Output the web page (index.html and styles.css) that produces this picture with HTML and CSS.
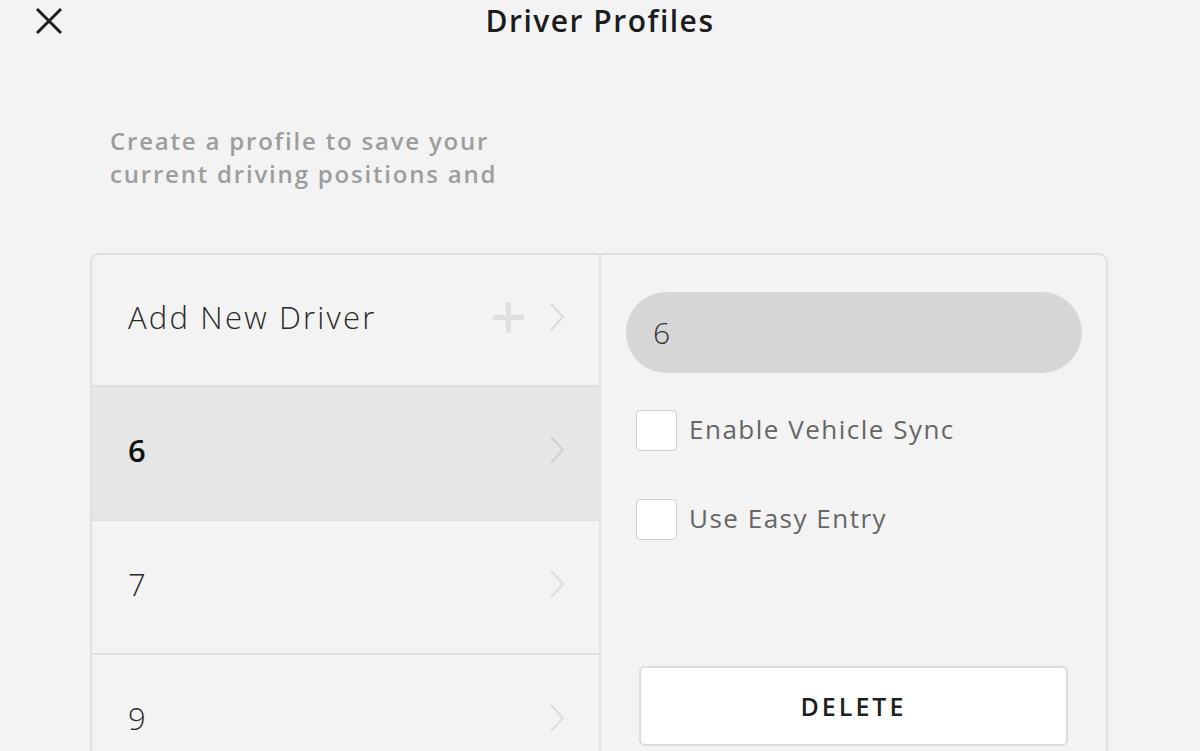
FILE: index.html
```html
<!DOCTYPE html>
<html lang="en">
<head>
<meta charset="utf-8">
<title>Driver Profiles</title>
<link rel="stylesheet" href="styles.css">
</head>
<body>
<div class="screen">
  <header class="topbar">
    <button class="close" aria-label="Close">
      <svg viewBox="0 0 28 28" width="28" height="28"><path d="M2 2 L26 26 M26 2 L2 26" stroke="#1e1e1e" stroke-width="3" fill="none"/></svg>
    </button>
    <h1 class="title">Driver Profiles</h1>
    <span class="spacer"></span>
  </header>

  <p class="intro">Create a profile to save your<br>current driving positions and</p>

  <section class="card">
    <ul class="drivers">
      <li class="row">
        <span class="row-label">Add New Driver</span>
        <span class="plus"></span>
        <svg class="chev" viewBox="0 0 16 28" width="16" height="28"><path d="M2 1 L14 14 L2 27" stroke="#d9d9d9" stroke-width="2" fill="none"/></svg>
      </li>
      <li class="row selected">
        <span class="row-label">6</span>
        <svg class="chev" viewBox="0 0 16 28" width="16" height="28"><path d="M2 1 L14 14 L2 27" stroke="#d0d0d0" stroke-width="2" fill="none"/></svg>
      </li>
      <li class="row">
        <span class="row-label">7</span>
        <svg class="chev" viewBox="0 0 16 28" width="16" height="28"><path d="M2 1 L14 14 L2 27" stroke="#dcdcdc" stroke-width="2" fill="none"/></svg>
      </li>
      <li class="row">
        <span class="row-label">9</span>
        <svg class="chev" viewBox="0 0 16 28" width="16" height="28"><path d="M2 1 L14 14 L2 27" stroke="#dcdcdc" stroke-width="2" fill="none"/></svg>
      </li>
    </ul>
    <div class="detail">
      <div class="name-field">6</div>
      <label class="check"><span class="box"></span><span class="check-text">Enable Vehicle Sync</span></label>
      <label class="check"><span class="box"></span><span class="check-text">Use Easy Entry</span></label>
      <button class="delete">DELETE</button>
    </div>
  </section>
</div>
</body>
</html>
```

FILE: styles.css
```css
html, body {
  margin: 0;
  padding: 0;
  overflow: hidden;
  background: #f3f3f3;
}

body {
  font-family: "Open Sans", "Noto Sans", sans-serif;
  color: #222;
}

.screen {
  width: 1200px;
  height: 751px;
}

.topbar {
  display: grid;
  grid-template-columns: 1fr auto 1fr;
  align-items: center;
  height: 34px;
}

.close {
  justify-self: start;
  align-self: start;
  margin: 7px 0 0 35px;
  padding: 0;
  border: 0;
  background: none;
  width: 28px;
  height: 28px;
  display: flex;
}

.title {
  margin: 0;
  font-size: 30px;
  font-weight: 600;
  color: #1c1c1c;
  letter-spacing: 1.5px;
}

.intro {
  margin: 90px 0 0 110px;
  font-size: 24px;
  line-height: 33px;
  font-weight: 600;
  color: #9d9d9d;
  letter-spacing: 1.8px;
}

.card {
  margin: 63px 0 0 90px;
  width: 1018px;
  height: 540px;
  box-sizing: border-box;
  border: 2px solid #e0e0e0;
  border-radius: 9px;
  display: grid;
  grid-template-columns: 509px 1fr;
  overflow: hidden;
}

.drivers {
  list-style: none;
  margin: 0;
  padding: 0;
  border-right: 2px solid #e2e2e2;
}

.row {
  height: 132px;
  box-sizing: border-box;
  border-bottom: 2px solid #e0e0e0;
  display: flex;
  align-items: center;
  padding: 0 34px 6px 36px;
}

.row + .row {
  height: 134px;
}

.row.selected {
  background: #e6e6e6;
}

.row-label {
  flex: 1;
  font-size: 31px;
  font-weight: 300;
  color: #2a2a2a;
  letter-spacing: 2.2px;
}

.row.selected .row-label {
  font-weight: 600;
  color: #111;
}

.plus {
  position: relative;
  width: 31px;
  height: 31px;
  margin-right: 25px;
}

.plus::before,
.plus::after {
  content: "";
  position: absolute;
  background: #e0e0e0;
}

.plus::before {
  left: 0;
  right: 0;
  top: 13px;
  height: 5px;
}

.plus::after {
  top: 0;
  bottom: 0;
  left: 13px;
  width: 5px;
}

.chev {
  display: block;
}

.detail {
  padding: 37px 24px 0 25px;
  display: flex;
  flex-direction: column;
}

.name-field {
  height: 81px;
  border-radius: 41px;
  background: #d6d6d6;
  display: flex;
  align-items: center;
  padding-left: 27px;
  font-size: 30px;
  font-weight: 300;
  color: #333;
}

.check {
  display: flex;
  align-items: center;
  margin-left: 10px;
  font-size: 26px;
  color: #666;
  letter-spacing: 1.5px;
}

.check-text {
  padding-bottom: 4px;
}

.check:first-of-type {
  margin-top: 37px;
}

.check + .check {
  margin-top: 48px;
}

.box {
  width: 39px;
  height: 39px;
  background: #fff;
  border: 1px solid #cfcfcf;
  border-radius: 4px;
  margin-right: 12px;
}

.delete {
  margin: 126px 14px 0 13px;
  height: 80px;
  background: #fff;
  border: 2px solid #dcdcdc;
  border-radius: 6px;
  font-family: "Open Sans", "Noto Sans", sans-serif;
  font-size: 25px;
  font-weight: 600;
  color: #1f1f1f;
  letter-spacing: 3px;
}
```
